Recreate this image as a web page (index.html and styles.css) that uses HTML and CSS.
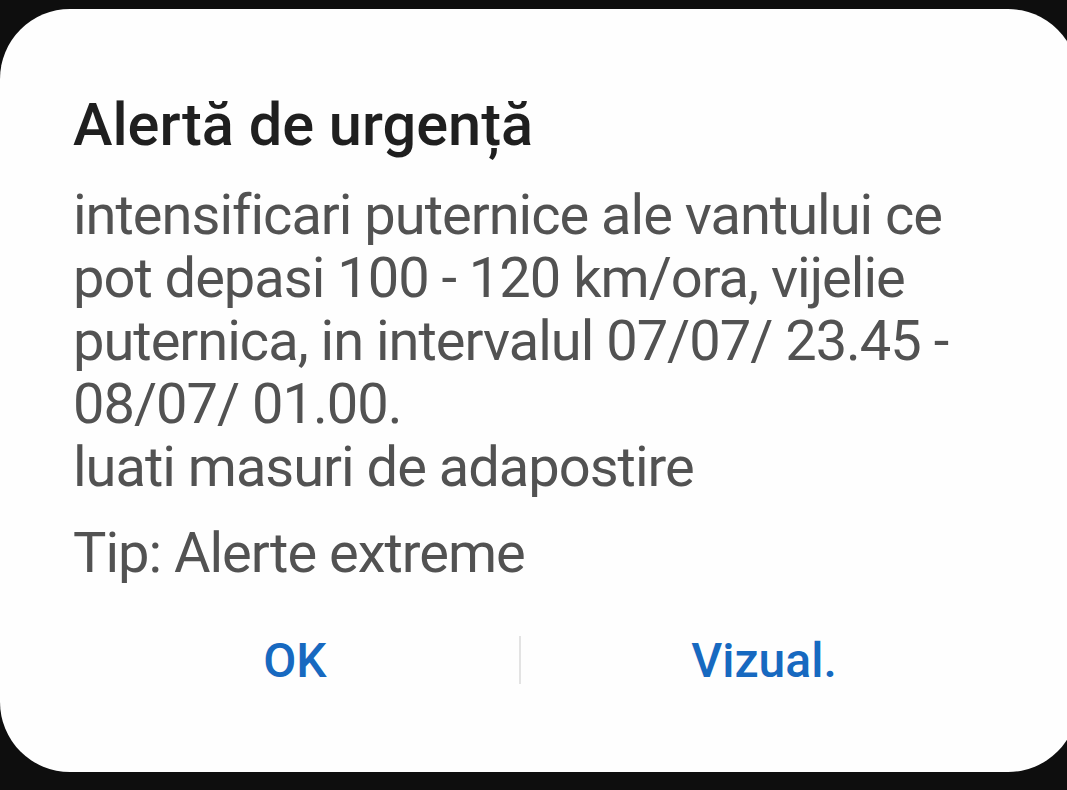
FILE: index.html
```html
<!DOCTYPE html>
<html lang="ro">
<head>
<meta charset="utf-8">
<link rel="stylesheet" href="styles.css">
</head>
<body>
<div class="dialog">
  <h1 class="title">Alertă de urgență</h1>
  <p class="message">intensificari puternice ale vantului ce pot depasi 100 - 120 km/ora, vijelie puternica, in intervalul 07/07/ 23.45 - 08/07/ 01.00.<br>luati masuri de adapostire</p>
  <p class="type">Tip: Alerte extreme</p>
  <div class="actions">
    <button class="btn">OK</button>
    <span class="divider"></span>
    <button class="btn">Vizual.</button>
  </div>
</div>
</body>
</html>
```

FILE: styles.css
```css
html, body {
  margin: 0;
  padding: 0;
  background: #0e0e0e;
  width: 1067px;
  height: 790px;
  overflow: hidden;
}
.dialog {
  box-sizing: border-box;
  margin-top: 9px;
  width: 1078px;
  height: 763px;
  background: #fefefe;
  border-radius: 70px;
  padding: 81px 70px 0 73px;
  font-family: Roboto, "Noto Sans", sans-serif;
  display: flex;
  flex-direction: column;
}
.title {
  margin: 0;
  font-size: 59.5px;
  font-weight: 500;
  color: #1f1f1f;
  line-height: 70px;
}
.message {
  margin: 24px 0 0 0;
  font-size: 56px;
  letter-spacing: -1px;
  font-weight: 400;
  color: #525252;
  line-height: 63px;
  width: 900px;
}
.type {
  margin: 23px 0 0 0;
  font-size: 56px;
  letter-spacing: -1px;
  color: #525252;
  line-height: 63px;
}
.actions {
  margin: 45px 0 0 -2px;
  display: grid;
  grid-template-columns: 448px 2px 486px;
  align-items: center;
  height: 60px;
}
.btn {
  border: 0;
  background: none;
  font-family: Roboto, "Noto Sans", sans-serif;
  font-size: 48px;
  font-weight: 500;
  color: #1769c0;
  padding: 0;
  text-align: center;
}
.divider {
  width: 2px;
  height: 48px;
  background: #e3e3e3;
}
```
